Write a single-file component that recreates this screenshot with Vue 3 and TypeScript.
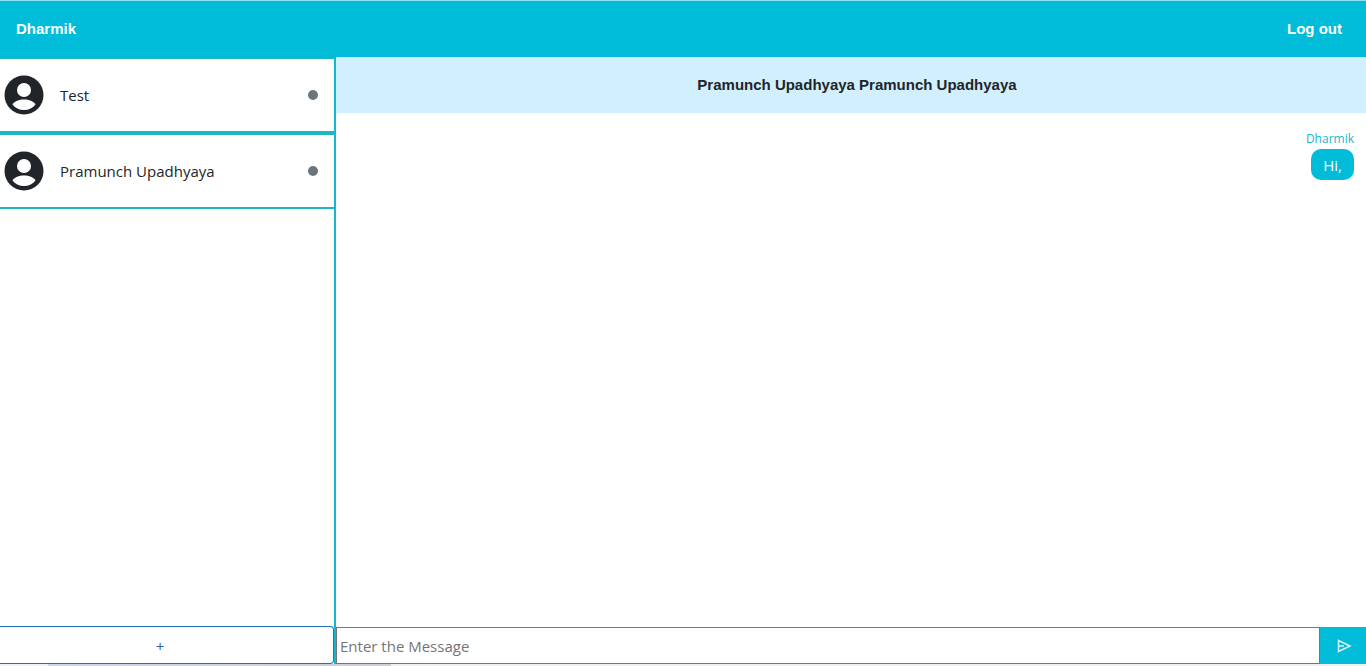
<script setup lang="ts">
import { ref } from 'vue'

interface Contact {
  id: number
  name: string
}

interface Message {
  id: number
  author: string
  text: string
}

const contacts: Contact[] = [
  { id: 1, name: 'Test' },
  { id: 2, name: 'Pramunch Upadhyaya' },
]
const messages = ref<Message[]>([{ id: 1, author: 'Dharmik', text: 'Hi,' }])
const draft = ref('')

function send() {
  const text = draft.value.trim()
  if (!text) return
  messages.value.push({ id: messages.value.length + 1, author: 'Dharmik', text })
  draft.value = ''
}
</script>

<template>
  <div class="app">
    <header class="topbar">
      <span class="user">Dharmik</span>
      <button class="logout" type="button">Log out</button>
    </header>
    <div class="body">
      <aside class="sidebar">
        <ul class="contacts">
          <li v-for="c in contacts" :key="c.id">
            <button class="contact" type="button">
              <svg class="avatar" viewBox="0 0 40 40" aria-hidden="true">
                <circle cx="20" cy="20" r="19.5" fill="#212529" />
                <circle cx="20" cy="15" r="7" fill="#fff" />
                <path d="M8.500 29.500C10.500 26 15 24.500 20 24.500s9.500 1.500 11.500 5C29 33 25 35 20 35S11 33 8.500 29.500Z" fill="#fff" />
              </svg>
              <span class="name">{{ c.name }}</span>
              <span class="status"></span>
            </button>
          </li>
        </ul>
        <button class="add" type="button" aria-label="Add chat">+</button>
      </aside>
      <main class="chat">
        <h1 class="title">Pramunch Upadhyaya Pramunch Upadhyaya</h1>
        <div class="messages">
          <div v-for="m in messages" :key="m.id" class="message">
            <span class="author">{{ m.author }}</span>
            <p class="bubble">{{ m.text }}</p>
          </div>
        </div>
        <form class="composer" @submit.prevent="send">
          <input v-model="draft" type="text" placeholder="Enter the Message" aria-label="Message" />
          <button class="send" type="submit" aria-label="Send">
            <svg viewBox="0 0 16 16" aria-hidden="true">
              <path d="M2.500 2.500 14 8 2.500 13.500V8ZM2.500 8H8" fill="none" stroke="#d9f6fa" stroke-width="1.500" />
            </svg>
          </button>
        </form>
      </main>
    </div>
    <div class="edge"></div>
  </div>
</template>

<style>
body {
  margin: 0;
}
</style>

<style scoped>
.app {
  display: flex;
  flex-direction: column;
  height: 100vh;
  box-sizing: border-box;
  border-top: 1px solid #8fe3ee;
  background: #fff;
  color: #212529;
  font: 400 15px/24px "Open Sans", "Noto Sans", sans-serif;
}
.app * {
  box-sizing: border-box;
}
button, input {
  margin: 0;
  font: inherit;
  color: inherit;
}
button {
  cursor: pointer;
}
.topbar {
  flex: none;
  display: flex;
  align-items: center;
  justify-content: space-between;
  height: 56px;
  padding: 0 24px 0 16px;
  background: #00bcd8;
  color: #fff;
  font: 700 15px/24px "Liberation Sans", sans-serif;
}
.logout {
  padding: 0;
  border: 0;
  background: none;
}
.body {
  flex: 1;
  min-height: 0;
  display: flex;
}
.sidebar {
  flex: none;
  width: 336px;
  display: flex;
  flex-direction: column;
  justify-content: space-between;
  border-right: 2px solid #0dbace;
}
.contacts {
  list-style: none;
  margin: 0;
  padding: 0;
}
.contact {
  display: flex;
  align-items: center;
  width: 100%;
  height: 76px;
  padding: 0 16px 0 4px;
  border: 0 solid #1cb6c6;
  border-width: 2px 0;
  background: #fff;
  text-align: left;
}
.avatar {
  width: 40px;
  height: 40px;
  margin-right: 16px;
}
.name {
  flex: 1;
}
.status {
  width: 10px;
  height: 10px;
  border-radius: 50%;
  background: #6c757d;
}
.add {
  height: 38px;
  padding: 2px 13px 0 0;
  border: 1px solid #1f70ba;
  border-left: 0;
  border-radius: 0 4px 4px 0;
  background: #fff;
  color: #1f62b0;
}
.chat {
  flex: 1;
  min-width: 0;
  display: flex;
  flex-direction: column;
}
.title {
  margin: 0;
  padding: 16px;
  padding-left: 28px;
  background: #d1effc;
  text-align: center;
  font: 700 15px/24px "Liberation Sans", sans-serif;
}
.messages {
  flex: 1;
  min-height: 0;
  overflow: auto;
  padding: 16px 12px;
}
.message {
  display: flex;
  flex-direction: column;
  align-items: flex-end;
}
.author {
  color: #1cb6c6;
  font-size: 12px;
  line-height: 20px;
}
.bubble {
  margin: 0;
  padding: 4px 12px 3px;
  border-radius: 10px;
  background: #00bcd8;
  color: #fff;
}
.composer {
  display: flex;
  height: 37px;
}
.composer input {
  flex: 1;
  min-width: 0;
  padding: 0 3px;
  border: 1px solid #767676;
  border-radius: 0;
  background: #fff;
  outline: none;
}
.composer input::placeholder {
  color: #757575;
  opacity: 1;
}
.send {
  width: 46px;
  padding: 0 0 0 2px;
  border: 0;
  background: #00bcd8;
  display: grid;
  place-items: center;
}
.send svg {
  width: 16px;
  height: 16px;
}
.edge {
  flex: none;
  height: 2px;
  background: linear-gradient(to right, #eef3fc 48px, #ccd6ee 48px, #cfcfd4 391px, #efefef 391px);
}
</style>
